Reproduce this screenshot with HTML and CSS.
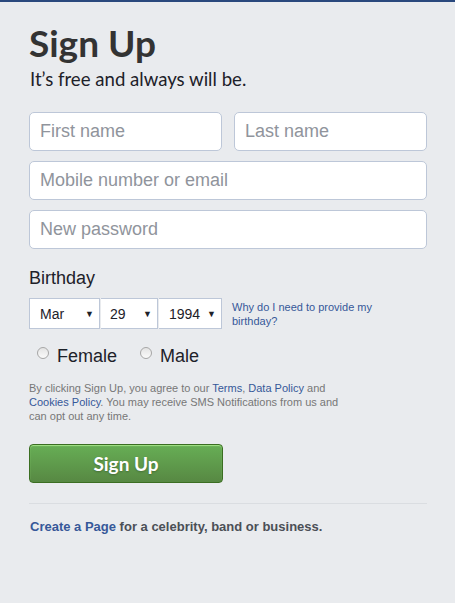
FILE: index.html
```html
<!DOCTYPE html>
<html lang="en">
<head>
  <meta charset="UTF-8">
  <meta name="viewport" content="width=device-width, initial-scale=1">
  <title>Sign Up</title>
  <link rel="stylesheet" href="styles.css">
</head>
<body>
  <div id="signup-container" class="signup">
    <h1>Sign Up</h1>
    <p class="tagline">It’s free and always will be.</p>
    <form id="signup-form">
      <div class="name-row">
        <input type="text" name="firstname" placeholder="First name">
        <input type="text" name="lastname" placeholder="Last name">
      </div>
      <input type="text" name="contact" placeholder="Mobile number or email">
      <input type="password" name="password" placeholder="New password">

      <div class="birthday-label">Birthday</div>
      <div class="birthday-row">
        <div class="selects">
          <div class="select month">Mar <span class="arrow">▼</span></div>
          <div class="select day">29 <span class="arrow">▼</span></div>
          <div class="select year">1994 <span class="arrow">▼</span></div>
        </div>
        <a href="#" class="why">Why do I need to provide my birthday?</a>
      </div>

      <div class="gender-row">
        <label><span class="radio"></span>Female</label>
        <label><span class="radio"></span>Male</label>
      </div>

      <p class="terms">By clicking Sign Up, you agree to our <a href="#">Terms</a>, <a href="#">Data Policy</a> and <a href="#">Cookies Policy</a>. You may receive SMS Notifications from us and can opt out any time.</p>

      <button type="submit">Sign Up</button>
    </form>
    <div class="divider"></div>
    <p class="create-page"><a href="#">Create a Page</a> for a celebrity, band or business.</p>
  </div>
</body>
</html>
```

FILE: styles.css
```css
body {
  margin: 0;
  background-color: #e9ebee;
  border-top: 2px solid #29487d;
  font-family: "Liberation Sans", Arial, sans-serif;
  color: #1d2129;
}
.signup {
  width: 398px;
  padding: 21px 0 40px 29px;
}
.signup h1 {
  margin: 0;
  font-family: Lato, "Open Sans", sans-serif;
  font-size: 37px;
  font-weight: 700;
  line-height: 40px;
  color: #333;
}
.tagline {
  margin: 4px 0 0 1px;
  font-family: Lato, "Open Sans", sans-serif;
  font-size: 18.6px;
  line-height: 24px;
  color: #1d2129;
}
#signup-form {
  margin-top: 21px;
  display: flex;
  flex-direction: column;
  gap: 10px;
}
.name-row {
  display: flex;
  gap: 12px;
}
.signup input {
  box-sizing: border-box;
  width: 100%;
  height: 39px;
  padding: 0 10px;
  border: 1px solid #bdc7d8;
  border-radius: 5px;
  background: #fff;
  font-family: "Liberation Sans", Arial, sans-serif;
  font-size: 18px;
  color: #1d2129;
}
.signup input::placeholder {
  color: #90949c;
}
.name-row input {
  flex: 1;
}
.birthday-label {
  margin-top: 8px;
  font-size: 18px;
  line-height: 22px;
}
.birthday-row {
  margin-top: -1px;
  display: flex;
  align-items: center;
  gap: 10px;
}
.selects {
  display: flex;
}
.select {
  box-sizing: border-box;
  height: 31px;
  display: flex;
  align-items: center;
  justify-content: space-between;
  padding: 0 5px 0 10px;
  border: 1px solid #bdc7d8;
  background: #fff;
  font-size: 14px;
  color: #1d2129;
}
.select + .select {
  border-left: none;
  margin-left: 1px;
}
.month { width: 71px; }
.day { width: 57px; padding-left: 9px; }
.year { width: 63px; padding-left: 10px; }
.arrow {
  font-size: 9px;
  color: #1d2129;
}
.why {
  width: 150px;
  font-size: 11px;
  line-height: 14px;
  color: #365899;
  text-decoration: none;
}
.gender-row {
  display: flex;
  gap: 23px;
  margin: 6px 0 0 8px;
}
.gender-row label {
  display: flex;
  align-items: center;
  font-size: 18px;
  line-height: 22px;
}
.radio {
  box-sizing: border-box;
  width: 12px;
  height: 12px;
  margin: -6px 8px 0 0;
  border: 1px solid #a6a6a6;
  border-radius: 50%;
  background: linear-gradient(#e4e4e4, #fafafa);
}
.terms {
  margin: 4px 0 0;
  width: 318px;
  font-size: 11px;
  line-height: 14px;
  color: #777;
}
.terms a {
  color: #365899;
  text-decoration: none;
}
.signup button {
  margin-top: 11px;
  width: 194px;
  height: 39px;
  border: 1px solid #3b6e22;
  border-radius: 4px;
  background: linear-gradient(#67ae55, #578843);
  box-shadow: inset 0 1px 1px #a4e388;
  color: #fff;
  font-family: Lato, "Open Sans", sans-serif;
  font-size: 19px;
  font-weight: 700;
  text-shadow: 0 1px 2px rgba(0, 0, 0, 0.25);
  cursor: pointer;
}
.divider {
  margin-top: 20px;
  height: 1px;
  background-color: #dadde1;
}
.create-page {
  margin: 15px 0 0 1px;
  font-size: 13px;
  line-height: 16px;
  font-weight: bold;
  color: #4b4f56;
}
.create-page a {
  color: #365899;
  text-decoration: none;
}
```
